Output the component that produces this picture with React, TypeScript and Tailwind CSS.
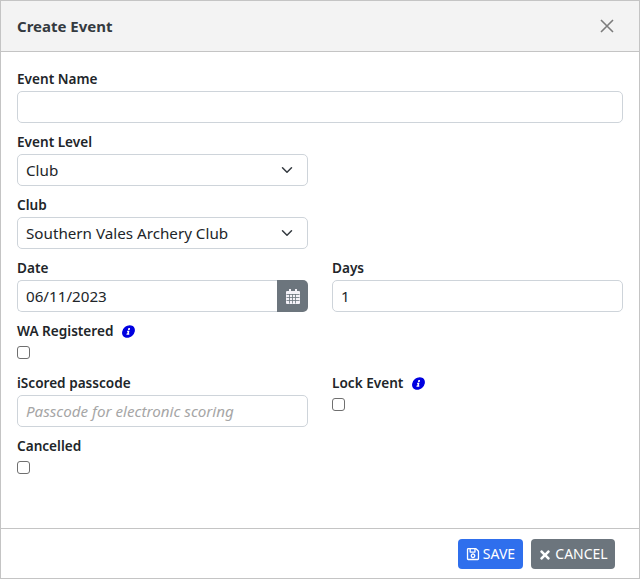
import React from "react";
import { FaRegSave, FaTimes, FaInfoCircle } from "react-icons/fa";

const font = "font-['Noto_Sans','Open_Sans',sans-serif]";

function Label({ children, info }: { children: React.ReactNode; info?: boolean }) {
  return (
    <div className="flex h-[21px] items-start text-[13.6px] leading-[18px] font-semibold text-[#212529]">
      <span>{children}</span>
      {info && <FaInfoCircle className="mt-[3px] ml-[9px] -skew-x-12 text-[13px] text-[#0000e0]" />}
    </div>
  );
}

function Chevron() {
  return (
    <svg width="16" height="16" viewBox="0 0 16 16" fill="none" stroke="#343a40" strokeWidth="2" strokeLinecap="round" strokeLinejoin="round">
      <path d="M2 5l6 6 6-6" transform="translate(2 2) scale(0.75)" />
    </svg>
  );
}

function Select({ value }: { value: string }) {
  return (
    <div className="flex h-[32px] items-center justify-between rounded-[5px] border border-[#ced4da] bg-white pr-[12px] pl-[8px] text-[15.2px] leading-[30px] text-[#212529]">
      <span>{value}</span>
      <Chevron />
    </div>
  );
}

const inputCls =
  "block h-[32px] w-full rounded-[5px] border border-[#ced4da] bg-white px-[8px] text-[15.2px] text-[#212529] outline-none placeholder:text-[#a6a6a6] placeholder:italic";

function Check() {
  return <input type="checkbox" className="mt-[3px] block h-[13px] w-[13px] appearance-none rounded-[3px] border border-[#6f6f6f] bg-white" />;
}

function Calendar() {
  return (
    <svg width="14" height="15" viewBox="0 0 14 15">
      <path d="M3 0h2v2h4V0h2v2h2a1 1 0 0 1 1 1v11a1 1 0 0 1-1 1H1a1 1 0 0 1-1-1V3a1 1 0 0 1 1-1h2z" fill="#f4f2f8" />
      <path d="M0.5 5.5h13M0.5 8.5h13M0.5 11.5h13M3.5 5v9.5M6.5 5v9.5M9.5 5v9.5" stroke="#6c757d" strokeWidth="1" fill="none" opacity="0.8" />
    </svg>
  );
}

export default function App() {
  return (
    <div className={`${font} flex h-[579px] w-[640px] flex-col border border-[#c4c4c4] bg-white`}>
      <div className="flex h-[51px] items-center justify-between border-b border-[#c4c4c4] bg-[#f3f3f3] pr-[25px] pl-[16px]">
        <h1 className="text-[15px] font-bold text-[#343a40]">Create Event</h1>
        <svg width="14" height="14" viewBox="0 0 14 14" stroke="#7c7c7c" strokeWidth="1.6">
          <path d="M1 1l12 12M13 1L1 13" />
        </svg>
      </div>
      <div className="flex flex-1 flex-col gap-[10px] px-[16px] pt-[18px]">
        <div>
          <Label>Event Name</Label>
          <input className={inputCls} />
        </div>
        <div className="grid grid-cols-2 gap-x-[24px]">
          <div>
            <Label>Event Level</Label>
            <Select value="Club" />
          </div>
        </div>
        <div className="grid grid-cols-2 gap-x-[24px]">
          <div>
            <Label>Club</Label>
            <Select value="Southern Vales Archery Club" />
          </div>
        </div>
        <div className="grid grid-cols-2 gap-x-[24px]">
          <div>
            <Label>Date</Label>
            <div className="flex h-[32px]">
              <input defaultValue="06/11/2023" className="h-[32px] min-w-0 flex-1 rounded-l-[5px] border border-r-0 border-[#ced4da] bg-white px-[8px] text-[15.2px] text-[#212529] outline-none" />
              <div className="flex w-[31px] items-center justify-center rounded-r-[5px] bg-[#6c757d]">
                <Calendar />
              </div>
            </div>
          </div>
          <div>
            <Label>Days</Label>
            <input defaultValue="1" className={inputCls} />
          </div>
        </div>
        <div className="h-[42px]">
          <Label info>WA Registered</Label>
          <Check />
        </div>
        <div className="grid grid-cols-2 gap-x-[24px]">
          <div>
            <Label>iScored passcode</Label>
            <input placeholder="Passcode for electronic scoring" className={inputCls} />
          </div>
          <div>
            <Label info>Lock Event</Label>
            <Check />
          </div>
        </div>
        <div>
          <Label>Cancelled</Label>
          <Check />
        </div>
      </div>
      <div className="flex h-[50px] items-start justify-end gap-[8px] border-t border-[#c4c4c4] pt-[10px] pr-[24px]">
        <button className="flex h-[30px] w-[65px] items-center justify-center gap-[3px] rounded-[4px] bg-[#2f6fed] pb-[2px] text-[14px] text-white">
          <FaRegSave className="mt-[2px] text-[14px]" /> SAVE
        </button>
        <button className="flex h-[30px] w-[84px] items-center justify-center gap-[3px] rounded-[4px] bg-[#6c757d] pb-[2px] text-[14px] text-white">
          <FaTimes className="mt-[3px] text-[14px]" /> CANCEL
        </button>
      </div>
    </div>
  );
}
